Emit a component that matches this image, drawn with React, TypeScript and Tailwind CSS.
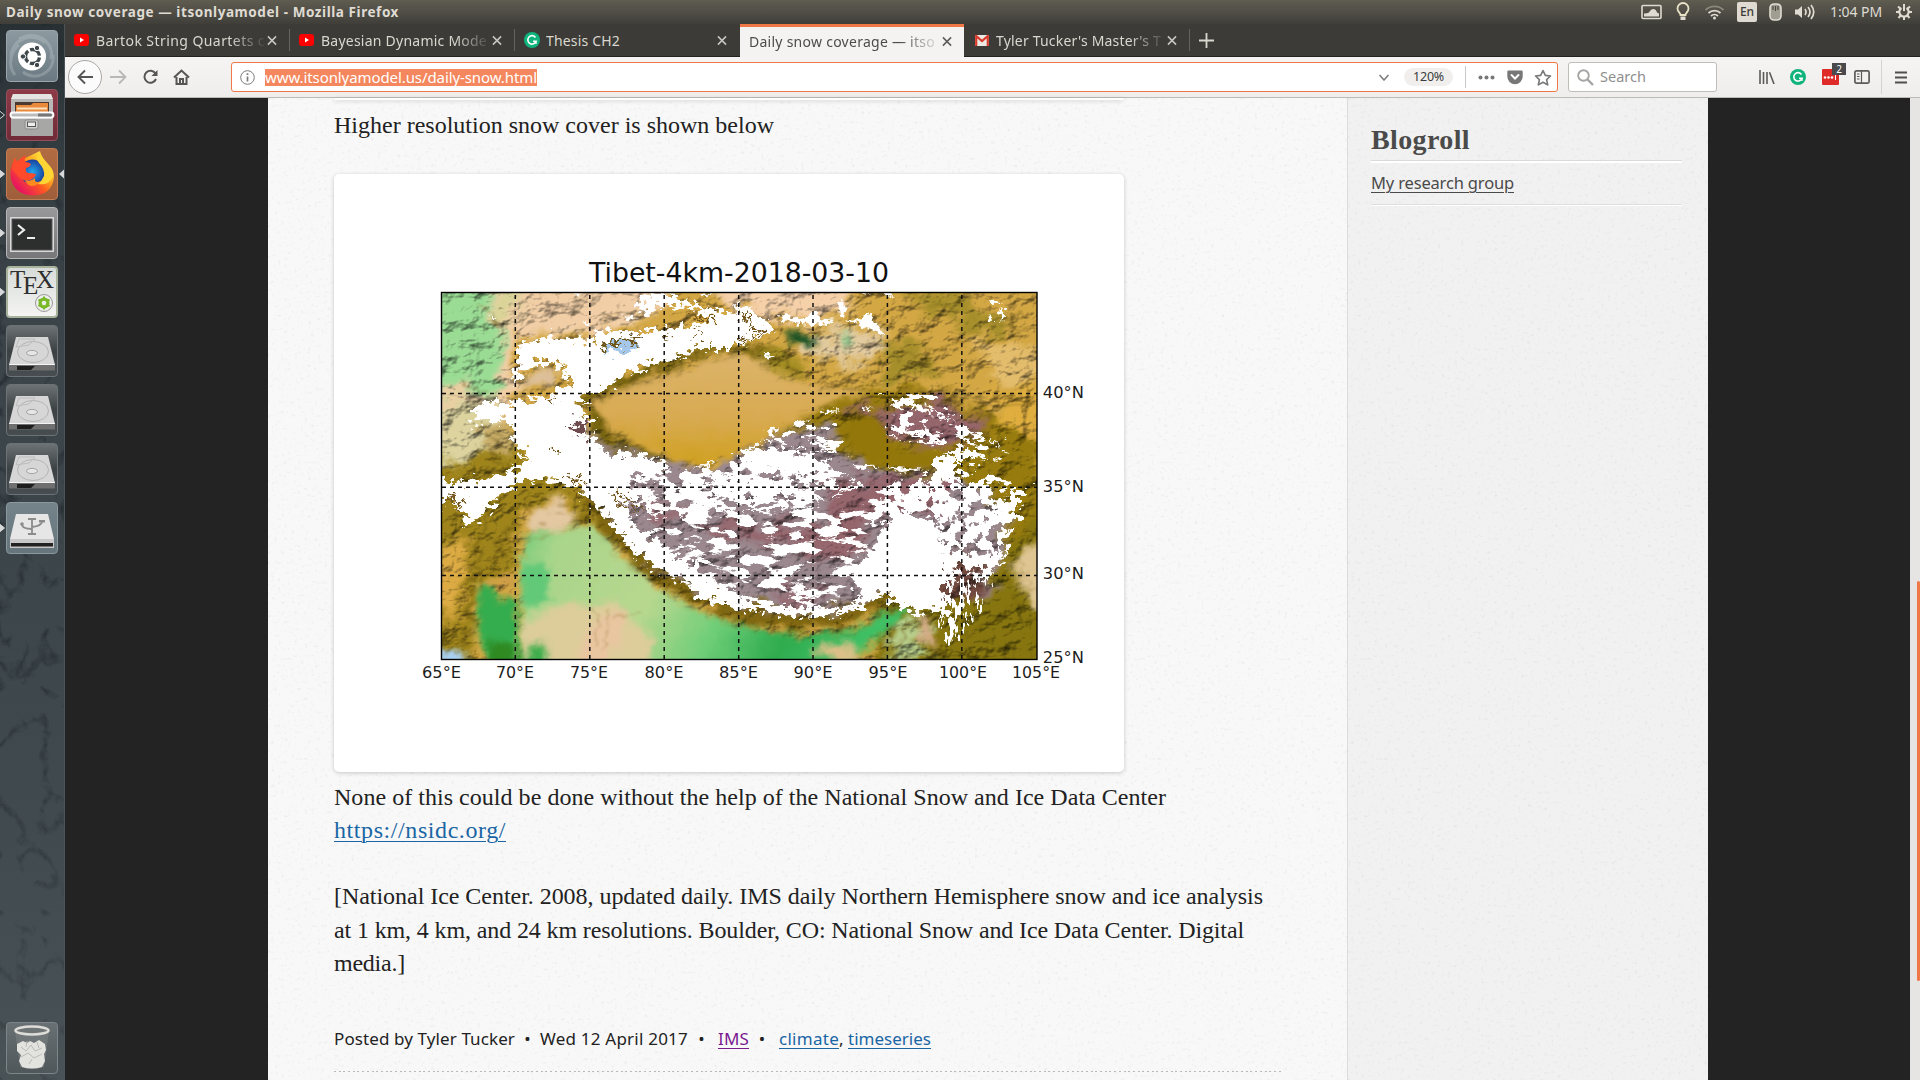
import { useLayoutEffect, useRef, type ReactNode } from "react";

/* Text run whose tracking is adjusted so it occupies a given width. */
function Fit({ w, className = "", children }: { w: number; className?: string; children: string }) {
  const ref = useRef<HTMLSpanElement>(null);
  useLayoutEffect(() => {
    const el = ref.current;
    if (!el) return;
    el.style.letterSpacing = "0px";
    const natural = el.getBoundingClientRect().width;
    el.style.letterSpacing = `${(w - natural) / children.length}px`;
  }, [w, children]);
  return (
    <span ref={ref} className={`inline-block whitespace-pre ${className}`}>
      {children}
    </span>
  );
}

/* ---------- top panel ---------- */

function TopPanel() {
  return (
    <header className="flex h-6 items-center justify-between bg-linear-to-b from-[#5f5c50] via-[#504e46] to-[#3f3e39] pl-1.5 pr-[7px] text-[#dfdbd2]">
      <Fit w={393} className="text-[13.5px] leading-6 font-bold">Daily snow coverage — itsonlyamodel - Mozilla Firefox</Fit>
      <div className="flex h-6 items-center">
        <svg width="21" height="16" viewBox="0 0 21 16">
          <rect x="1" y="1.500" width="19" height="13" rx="1" fill="none" stroke="#dfdbd2" strokeWidth="1.600" />
          <path d="M3 9.500Q6 9.500 8 8.500 10 4.500 13 5 15.500 5.500 16 8.500L18 9.500V12.500H3Z" fill="#dfdbd2" />
        </svg>
        <svg className="ml-[13px]" width="16" height="20" viewBox="0 0 16 20">
          <path d="M5.500 13C5.500 11 2.500 10 2.500 6.500a5.500 5.500 0 0 1 11 0c0 3.500-3 4.500-3 6.500Z" fill="none" stroke="#e8e2c6" strokeWidth="1.800" />
          <path d="M5.500 14.500h5v3.500h-5z" fill="#dfdbd2" />
        </svg>
        <svg className="ml-[13px]" width="21" height="16" viewBox="0 0 21 16" fill="none" strokeWidth="1.800">
          <path d="M1.500 6a13 13 0 0 1 18 0" stroke="#8a877d" />
          <path d="M4.500 9a9 9 0 0 1 12 0" stroke="#dfdbd2" />
          <path d="M7 12a5 5 0 0 1 7 0" stroke="#dfdbd2" />
          <circle cx="10.500" cy="14" r="1.500" fill="#dfdbd2" />
        </svg>
        <span className="ml-[12px] flex h-5 w-5 items-center justify-center rounded-[2px] bg-[#dfdbd2] text-[12px] font-medium text-[#3c3b37]">En</span>
        <svg className="ml-[12px]" width="13" height="18" viewBox="0 0 13 18">
          <rect x="1" y="1" width="11" height="16" rx="4" fill="#a09d93" stroke="#dfdbd2" strokeWidth="1.600" />
          <path d="M6.500 3v5M4 3v4M9 3v4" stroke="#4a4841" strokeWidth="1.200" />
        </svg>
        <svg className="ml-[12px]" width="22" height="18" viewBox="0 0 22 18" fill="none" stroke="#dfdbd2" strokeWidth="1.700">
          <path d="M1 6.500h3L8 3v12l-4-3.500H1Z" fill="#dfdbd2" stroke="none" />
          <path d="M11 6q2 3 0 6M14 4q4 5 0 10M17 2q5.500 7 0 14" />
        </svg>
        <Fit w={52} className="ml-[14px] text-[14px] leading-6">1:04 PM</Fit>
        <svg className="ml-[13px]" width="18" height="18" viewBox="0 0 18 18" fill="none" stroke="#dfdbd2">
          <path d="M6.500 5a4.700 4.700 0 1 0 5 0" strokeWidth="2.200" />
          <path d="M9 1v7" strokeWidth="2" />
          <path d="M9 14v3M1 9h3M14 9h3M3 3.500l2.300 2M15 3.500l-2.300 2M3.500 15l2-2.300M14.500 15l-2-2.300" strokeWidth="2" />
        </svg>
      </div>
    </header>
  );
}

/* ---------- launcher ---------- */

function Tile({ className = "", arrow, focus, children }: { className?: string; arrow?: "solid" | "hollow"; focus?: boolean; children: ReactNode }) {
  return (
    <div className="relative flex h-[52px] w-full shrink-0 pl-1.5">
      {arrow && (
        <svg className="absolute top-[21px] left-0" width="6" height="10" viewBox="0 0 6 10">
          <path d="M-1 0.500 4.500 5-1 9.500Z" fill={arrow === "solid" ? "#d6d8d9" : "none"} stroke="#d6d8d9" />
        </svg>
      )}
      {focus && (
        <svg className="absolute top-[21px] right-[1px]" width="5" height="10" viewBox="0 0 5 10">
          <path d="M5 .5V9.500L0 5Z" fill="#d6d8d9" />
        </svg>
      )}
      <div className={`h-[52px] w-[52px] overflow-hidden rounded-[4px] border ${className}`}>{children}</div>
    </div>
  );
}

function Drive() {
  return (
    <Tile className="border-[#6b7376] bg-linear-to-b from-[#6d7274] via-[#3c4143] to-[#474d50]">
      <svg width="50" height="50" viewBox="0 0 50 50">
        <path d="M9 11h32l7 28v5H2v-5Z" fill="#d6d6d6" />
        <path d="M2 39h46v5.500H2Z" fill="#6f6f6f" />
        <path d="M10 40h18l-4 4H10Z" fill="#1e1e1e" />
        <path d="M2 38.500h46" stroke="#f4f4f4" />
        <ellipse cx="26" cy="26" rx="15.500" ry="10.500" fill="none" stroke="#b5b5b5" />
        <path d="M12 13h16l-6 6-13 2Z" fill="none" stroke="#bdbdbd" />
        <ellipse cx="25" cy="27" rx="5.500" ry="2.600" fill="#e6e6e6" stroke="#a5a5a5" />
      </svg>
    </Tile>
  );
}

function Launcher() {
  return (
    <aside className="relative flex h-[1056px] w-[65px] shrink-0 flex-col gap-[7px] bg-[#3c4549] pt-1.5">
      <svg className="absolute inset-0" width="65" height="1056">
        <filter id="stone" colorInterpolationFilters="sRGB">
          <feTurbulence type="turbulence" baseFrequency="0.022 0.018" numOctaves="5" seed="7" />
          <feColorMatrix values="0 0 0 0 .12  0 0 0 0 .15  0 0 0 0 .17  -4 0 0 0 .85" />
        </filter>
        <linearGradient id="stoneShade" x2="0" y2="1">
          <stop offset="0" stopColor="#20282c" stopOpacity=".7" />
          <stop offset=".35" stopColor="#3a4347" stopOpacity="0" />
          <stop offset="1" stopColor="#5a6366" stopOpacity=".45" />
        </linearGradient>
        <rect width="65" height="1056" filter="url(#stone)" />
        <rect width="65" height="1056" fill="url(#stoneShade)" />
        <path d="M64.500 0V1056" stroke="#4c5457" />
      </svg>
      <Tile className="border-[#9aa6ab] bg-linear-to-b from-[#8c9aa0] to-[#6b7a82]">
        <svg width="50" height="50" viewBox="0 0 50 50">
          <g fill="none" stroke="#c8d0d4" strokeOpacity=".3" strokeWidth="3">
            <path d="M4 26C4 8 26 0 38 12M46 24c2 18-18 27-30 17M12 8C28-2 48 10 44 28M8 44C0 34 4 20 12 14" />
          </g>
          <circle cx="25" cy="25.500" r="14" fill="#fff" />
          <circle cx="25.500" cy="25.500" r="7" fill="none" stroke="#3f484c" strokeWidth="3.400" strokeDasharray="12.500 2.160" strokeDashoffset="-1" />
          <g fill="#3f484c" stroke="#fff">
            <circle cx="16" cy="25.500" r="2.700" />
            <circle cx="30" cy="17" r="2.700" />
            <circle cx="30" cy="34" r="2.700" />
          </g>
        </svg>
      </Tile>
      <Tile arrow="hollow" className="border-[#94505b] bg-linear-to-b from-[#8e3a48] to-[#702a38]">
        <svg width="50" height="50" viewBox="0 0 50 50">
          <path d="M6 4h38l2 6v36H4V10Z" fill="#b8b8b6" />
          <path d="M6 4h38l2 5H4Z" fill="#e4e4e2" />
          <path d="M8 12h34v12H8Z" fill="#4c3a30" />
          <path d="M9 15h15l2-2h15v11H9Z" fill="#e98a3a" />
          <path d="M10 18.500h30" stroke="#fbe0bd" strokeWidth="2" />
          <path d="M4 29h42v17H4Z" fill="#a7a7a5" />
          <rect x="3.500" y="22.500" width="43" height="5" rx="2.500" fill="#bbb" stroke="#fff" strokeWidth="1.800" />
          <path d="M31 23.500h13q2 1.500 0 3H31Z" fill="#777" />
          <rect x="18" y="30" width="13" height="9" rx="2" fill="#d2d2d0" stroke="#8a8a88" />
          <rect x="20.500" y="32" width="8" height="4.500" fill="#eee" stroke="#555" />
        </svg>
      </Tile>
      <Tile arrow="solid" focus className="border-[#c07d55] bg-linear-to-b from-[#b26c42] to-[#9f5e3a]">
        <svg width="50" height="50" viewBox="0 0 50 50">
          <defs>
            <linearGradient id="fxTail" x1=".85" y1=".1" x2=".15" y2=".8">
              <stop offset="0" stopColor="#fff04a" />
              <stop offset=".35" stopColor="#ffa81f" />
              <stop offset=".6" stopColor="#ff5a1f" />
              <stop offset="1" stopColor="#e8175d" />
            </linearGradient>
            <radialGradient id="fxGlobe">
              <stop offset="0" stopColor="#1fa8f0" />
              <stop offset="1" stopColor="#1c3f9c" />
            </radialGradient>
          </defs>
          <path d="M33 2q-3 4-3 8 16 4 17 18-2 18-21 18.500C8 46 3 33 3.500 22Q5 14 8 8q0 4 2 5Z" fill="url(#fxTail)" />
          <circle cx="25.500" cy="23" r="12.500" fill="url(#fxGlobe)" />
          <path d="M8 8q0 4 3 4 4-4 8-6-2 4-1 7 4 0 6 2-1 3-5 4-1 4 2 5 4 0 8 1-1 4-6 6-7 2-12-4L5 20Z" fill="#ff4a2b" />
          <path d="M18 31q6 2 10-2-1 6 6 3-4 5-10 5-4-1-6-6Z" fill="#ff8a1f" />
          <path d="M33 2q-6 6-1 12 6 6 5 13-2 5-6 8 10 2 15-7C49 18 36 14 33 2Z" fill="#ffd435" />
        </svg>
      </Tile>
      <Tile arrow="solid" className="border-[#b5b5b6] bg-linear-to-b from-[#98989a] to-[#77777a]">
        <svg width="50" height="50" viewBox="0 0 50 50">
          <rect x="3" y="9" width="44" height="35" fill="#d9d9d9" />
          <rect x="5" y="11" width="40" height="31" fill="#2d2e2e" stroke="#555" />
          <path d="M11 17l6 5-6 5" fill="none" stroke="#eee" strokeWidth="2.200" />
          <path d="M20 30h8" stroke="#eee" strokeWidth="2.200" />
        </svg>
      </Tile>
      <Tile arrow="solid" className="border-2 border-[#a9b39b] bg-linear-to-b from-[#d8dcd8] to-[#f4f4f2]">
        <div className="relative h-[48px] w-[48px]">
          <div className="flex pl-[2px] font-['Liberation_Serif',serif] text-[25px] leading-[24px] text-[#2f2f2f]">
            <span className="w-[13px]">T</span>
            <span className="w-[13px] translate-y-[6px]">E</span>
            <span>X</span>
          </div>
          <svg className="absolute inset-0" width="48" height="48" viewBox="0 0 48 48">
            <circle cx="36" cy="35" r="8.500" fill="#eee" stroke="#999" />
            <circle cx="36" cy="35" r="4" fill="none" stroke="#79b928" strokeWidth="3" />
            <path d="M36 28.500v13M30.400 31.700l11.200 6.500M30.400 38.200l11.200-6.500" stroke="#79b928" strokeWidth="2" />
            <circle cx="36" cy="35" r="2.200" fill="#eee" />
          </svg>
        </div>
      </Tile>
      <Drive />
      <Drive />
      <Drive />
      <Tile arrow="solid" className="border-[#8b989d] bg-linear-to-b from-[#75838a] to-[#66747b]">
        <svg width="50" height="50" viewBox="0 0 50 50">
          <path d="M9 11h32l6 25v9H3v-9Z" fill="#e6e6e6" />
          <path d="M3 36h44v9H3Z" fill="#c7c7c7" />
          <rect x="4" y="40" width="42" height="3.500" fill="#222" />
          <g stroke="#8b8b8b" strokeWidth="1.800" fill="none">
            <path d="M25 15v16M25 26q-10 0-10-5M25 24q10-1 10-6M21 31h8M21 16h8" />
          </g>
          <circle cx="15" cy="21" r="1.800" fill="#8b8b8b" />
          <path d="M32 17h6v2.500h-6z" fill="#8b8b8b" />
        </svg>
      </Tile>
      <div className="mt-auto pb-1.5">
        <Tile className="border-[#7d8588] bg-linear-to-b from-[#687073] to-[#4f575a]">
          <svg width="50" height="50" viewBox="0 0 50 50">
            <path d="M8 8h34l-5 36q-12 4-24 0Z" fill="#777e7f" fillOpacity=".7" />
            <path d="m10 21 6-3 4 2 3-2 4 2 5-3 6 4 1 6-2 4 1 7-3 6q-10 3-20 0l-3-6 2-6-4-4Z" fill="#e2e3df" />
            <path d="m14 24 5 4 5-6 4 6 7-3M14 34l7-4 6 5 8-4M22 41l3-5M20 18l-1 6M30 19l2 6" stroke="#b9bbb6" fill="none" />
            <ellipse cx="25" cy="7.500" rx="16.500" ry="4" fill="#6f7575" stroke="#dcdcd8" strokeWidth="2.600" />
          </svg>
        </Tile>
      </div>
    </aside>
  );
}

/* ---------- browser chrome ---------- */

function Close({ dark }: { dark?: boolean }) {
  return (
    <svg className="shrink-0" width="10" height="11" viewBox="0 0 11 11" stroke={dark ? "#5c5c5a" : "#c8c6c0"} strokeWidth="1.700">
      <path d="M1 1l9 9M10 1l-9 9" />
    </svg>
  );
}

function YouTube() {
  return (
    <svg className="mr-[7px] shrink-0" width="15" height="12" viewBox="0 0 15 12">
      <rect width="15" height="12" rx="3" fill="#f00" />
      <path d="M6 3.500 10 6 6 8.500Z" fill="#fff" />
    </svg>
  );
}

function Grammarly({ className = "" }: { className?: string }) {
  return (
    <svg className={`shrink-0 ${className}`} width="16" height="16" viewBox="0 0 16 16">
      <circle cx="8" cy="8" r="8" fill="#0fb37c" />
      <path d="M11.500 5.500A4.200 4.200 0 1 0 12 9.200H9" fill="none" stroke="#fff" strokeWidth="1.600" />
      <path d="M12 9v3" stroke="#fff" strokeWidth="1.300" />
    </svg>
  );
}

function TabBar() {
  const label = "min-w-0 flex-1 overflow-hidden text-[14px] leading-[33px]";
  const fade = "[mask-image:linear-gradient(to_right,#000_78%,transparent)]";
  return (
    <div className="flex h-[33px] items-stretch border-b border-[#24231f] bg-[#3c3b37] text-[#dad7cf]">
      <div className="flex w-[224px] items-center pr-[12px] pl-[9px]">
        <YouTube />
        <div className={`${label} ${fade}`}><Fit w={169}>Bartok String Quartets c</Fit></div>
        <Close />
      </div>
      <div className="my-[5px] w-px bg-[#66645e]" />
      <div className="flex w-[224px] items-center pr-[12px] pl-[9px]">
        <YouTube />
        <div className={`${label} ${fade}`}><Fit w={166}>Bayesian Dynamic Mode</Fit></div>
        <Close />
      </div>
      <div className="my-[5px] w-px bg-[#66645e]" />
      <div className="flex w-[225px] items-center pr-[13px] pl-[9px]">
        <Grammarly className="mr-[6px]" />
        <div className={label}><Fit w={74}>Thesis CH2</Fit></div>
        <Close />
      </div>
      <div className="z-10 -mb-px flex w-[224px] items-center border-t-[3px] border-[#f07746] bg-[#f4f3f1] pr-[12px] pb-[2px] pl-[9px] text-[#4c4c4a]">
        <div className={`${label} ${fade}`}><Fit w={186}>Daily snow coverage — itso</Fit></div>
        <Close dark />
      </div>
      <div className="flex w-[225px] items-center pr-[12px] pl-[11px]">
        <svg className="mr-[7px] shrink-0" width="14" height="11" viewBox="0 0 14 11">
          <rect width="14" height="11" fill="#ece9e4" />
          <path d="M1.200 11V1L7 6l5.800-5v10" fill="none" stroke="#d8392b" strokeWidth="2.200" />
        </svg>
        <div className={`${label} ${fade}`}><Fit w={165}>Tyler Tucker's Master's T</Fit></div>
        <Close />
      </div>
      <div className="my-[5px] w-px bg-[#66645e]" />
      <svg className="mt-[9px] ml-[9px]" width="15" height="15" viewBox="0 0 15 15" stroke="#dad7cf" strokeWidth="1.800">
        <path d="M7.500 0v15M0 7.500h15" />
      </svg>
    </div>
  );
}

function NavBar() {
  return (
    <div className="flex h-[41px] items-center border-b border-[#bdbbb8] bg-linear-to-b from-[#f5f4f3] to-[#efeeec] pl-[3px] text-[#5b5b59]">
      <span className="flex h-[34px] w-[34px] items-center justify-center rounded-full border border-[#a9a8a6] bg-[#fbfbfb]">
        <svg width="17" height="16" viewBox="0 0 17 16" fill="none" stroke="#555" strokeWidth="1.900"><path d="M8 1.500 1.500 8 8 14.500M2 8h14" /></svg>
      </span>
      <svg className="ml-[8px]" width="17" height="16" viewBox="0 0 17 16" fill="none" stroke="#b9b8b6" strokeWidth="1.800"><path d="M9 1.500l6.500 6.500L9 14.500M15 8H0" /></svg>
      <svg className="ml-[15px]" width="17" height="16" viewBox="0 0 17 16" fill="none" stroke="#555" strokeWidth="2">
        <path d="M13.500 4.500A6 6 0 1 0 14 10" /><path d="M15.500 1v6h-6Z" fill="#555" stroke="none" />
      </svg>
      <svg className="ml-[14px]" width="17" height="16" viewBox="0 0 17 16" fill="none" stroke="#555" strokeWidth="2">
        <path d="M1 8.500 8.500 1.500 16 8.500M3.500 8v7h10V8" /><path d="M7 15v-5h3v5" />
      </svg>
      <div className="ml-[41px] flex h-[30px] w-[1327px] items-center rounded-[3px] border border-[#f07746] bg-white pr-[5px] pl-[8px]">
        <svg width="15" height="15" viewBox="0 0 15 15" fill="none" stroke="#7b7b7b">
          <circle cx="7.500" cy="7.500" r="6.800" /><path d="M7.500 6.500v5M7.500 3.300v1.800" strokeWidth="1.700" />
        </svg>
        <span className="ml-[10px] flex h-[17px] items-center bg-[#f4875d] text-[15px] text-white"><Fit w={272}>www.itsonlyamodel.us/daily-snow.html</Fit></span>
        <svg className="ml-auto" width="10" height="7" viewBox="0 0 10 7" fill="none" stroke="#777" strokeWidth="1.500"><path d="M.5 1 5 6 9.500 1" /></svg>
        <span className="ml-[15px] flex h-[18px] w-[49px] items-center justify-center rounded-full bg-[#f0efee] text-[#3c3c3c]"><Fit w={31} className="text-[12.5px] leading-[18px]">120%</Fit></span>
        <span className="ml-[12px] h-[22px] w-px bg-[#c9c8c6]" />
        <svg className="ml-[12px]" width="17" height="5" fill="#777"><circle cx="2.500" cy="2.500" r="2" /><circle cx="8.500" cy="2.500" r="2" /><circle cx="14.500" cy="2.500" r="2" /></svg>
        <svg className="ml-[12px]" width="16" height="15" viewBox="0 0 16 15">
          <path d="M1.500.5h13q1.200 0 1.200 1.300V6.500a7.700 7.700 0 0 1-15.400 0V1.800Q.3.500 1.500.5Z" fill="#777" />
          <path d="M4.500 5 8 8.500 11.500 5" fill="none" stroke="#fff" strokeWidth="2" strokeLinecap="round" />
        </svg>
        <svg className="ml-[11px]" width="18" height="17" viewBox="0 0 18 17" fill="none" stroke="#777" strokeWidth="1.600" strokeLinejoin="round">
          <path d="M9 1.500l2.300 4.900 5.200.6-3.900 3.600 1.100 5.300L9 13.200l-4.700 2.700 1.100-5.300L1.500 7l5.200-.6Z" />
        </svg>
      </div>
      <div className="ml-[10px] flex h-[30px] w-[149px] items-center rounded-[3px] border border-[#bfbdb8] bg-white pl-[8px] text-[#8f8f8d]">
        <svg width="17" height="17" viewBox="0 0 17 17" fill="none" stroke="#a5a5a3" strokeWidth="1.900"><circle cx="6.500" cy="6.500" r="5.300" /><path d="M10.500 10.500 16 16" strokeWidth="2.400" /></svg>
        <Fit w={46} className="ml-[6px] text-[14.5px]">Search</Fit>
      </div>
      <svg className="ml-[42px]" width="16" height="14" viewBox="0 0 16 14" stroke="#5b5b59" strokeWidth="1.600"><path d="M1 0v14M4.500 2v12M8 2v12M10.500 2.200 15 14" /></svg>
      <Grammarly className="ml-[15px]" />
      <div className="relative ml-[16px] h-[16px] w-[17px] rounded-[1px] bg-[#df2a2a]">
        <svg className="absolute top-[6px] left-[1px]" width="15" height="5" fill="#fff"><circle cx="2" cy="2.500" r="1.300" /><circle cx="5.500" cy="2.500" r="1.300" /><circle cx="9" cy="2.500" r="1.300" /><path d="M12 0h1v5h-1z" /></svg>
        <span className="absolute -top-[6px] left-[10px] flex h-[12px] w-[14px] items-center justify-center bg-[#4a4a4c] text-[10px] text-white">2</span>
      </div>
      <svg className="ml-[15px]" width="16" height="14" viewBox="0 0 16 14" fill="none" stroke="#5b5b59" strokeWidth="1.700"><rect x=".9" y=".9" width="14.200" height="12.200" rx="1.500" /><path d="M7.500 1v12M3 4h2.500M3 6.500h2.500M3 9h2.500" strokeWidth="1.200" /></svg>
      <span className="ml-[11px] h-[34px] w-px bg-[#d4d3d0]" />
      <svg className="ml-[13px]" width="12" height="13" viewBox="0 0 12 13" stroke="#4f4f4d" strokeWidth="1.900"><path d="M0 1.500h12M0 6.500h12M0 11.500h12" /></svg>
    </div>
  );
}

/* ---------- snow cover figure ---------- */

const meridians = [515.3, 589.8, 664.2, 738.7, 813, 887.4, 961.8];
const parallels = [393.6, 487.2, 575.5];
const lonLabels: [string, number, number][] = [
  ["65°E", 441.5, 39], ["70°E", 515, 38], ["75°E", 589, 38], ["80°E", 664, 39], ["85°E", 738.5, 39],
  ["90°E", 813, 39], ["95°E", 888, 39], ["100°E", 963, 48], ["105°E", 1036, 48],
];
const latLabels: [string, number][] = [["40°N", 398.4], ["35°N", 492.2], ["30°N", 579], ["25°N", 663.4]];

/* Noise thresholded to white specks, kept inside a shape with an uneven outline. */
function SnowFilter({ id, freq, octaves, seed, matrix, spread }: { id: string; freq: string; octaves: number; seed: number; matrix: string; spread: number }) {
  return (
    <filter id={id} filterUnits="userSpaceOnUse" x="430" y="280" width="620" height="390" colorInterpolationFilters="sRGB">
      <feTurbulence type="fractalNoise" baseFrequency={freq} numOctaves={octaves} seed={seed} result="n" />
      <feColorMatrix in="n" values={matrix} result="m" />
      <feDisplacementMap in="SourceGraphic" in2="n" scale={spread} xChannelSelector="B" yChannelSelector="G" result="s" />
      <feComposite in="m" in2="s" operator="in" />
    </filter>
  );
}

function SnowMap() {
  return (
    <svg className="block" width="790" height="598" viewBox="334 174 790 598">
      <defs>
        <clipPath id="frame"><rect x="441.500" y="292.500" width="595.500" height="367" /></clipPath>
        <filter id="relief" filterUnits="userSpaceOnUse" x="430" y="280" width="620" height="390" colorInterpolationFilters="sRGB">
          <feGaussianBlur in="SourceGraphic" stdDeviation="4" result="b" />
          <feTurbulence type="fractalNoise" baseFrequency="0.040 0.055" numOctaves="4" seed="11" result="n" />
          <feDisplacementMap in="b" in2="n" scale="34" xChannelSelector="R" yChannelSelector="G" result="d" />
          <feColorMatrix in="n" values="0 0 0 0 0  0 0 0 0 0  0 0 0 0 0  1 0 0 0 0" result="h" />
          <feDiffuseLighting in="h" surfaceScale="5.500" diffuseConstant="1.300" lightingColor="#fff" result="l">
            <feDistantLight azimuth="225" elevation="52" />
          </feDiffuseLighting>
          <feComposite in="d" in2="l" operator="arithmetic" k1="0.820" k2="0.200" k3="0" k4="0" />
        </filter>
        <filter id="soft" filterUnits="userSpaceOnUse" x="430" y="280" width="620" height="390" colorInterpolationFilters="sRGB">
          <feGaussianBlur in="SourceGraphic" stdDeviation="3" result="b" />
          <feTurbulence type="fractalNoise" baseFrequency="0.060" numOctaves="3" seed="4" result="n" />
          <feDisplacementMap in="b" in2="n" scale="14" xChannelSelector="R" yChannelSelector="G" />
        </filter>
        <filter id="veins" filterUnits="userSpaceOnUse" x="430" y="280" width="620" height="390" colorInterpolationFilters="sRGB">
          <feTurbulence type="fractalNoise" baseFrequency="0.030 0.060" numOctaves="3" seed="4" result="n" />
          <feDisplacementMap in="SourceGraphic" in2="n" scale="40" xChannelSelector="R" yChannelSelector="G" result="d" />
          <feGaussianBlur in="d" stdDeviation="1.200" />
        </filter>
        <filter id="ragged" filterUnits="userSpaceOnUse" x="430" y="280" width="620" height="390" colorInterpolationFilters="sRGB">
          <feTurbulence type="fractalNoise" baseFrequency="0.130 0.160" numOctaves="3" seed="3" result="n" />
          <feDisplacementMap in="SourceGraphic" in2="n" scale="24" xChannelSelector="R" yChannelSelector="G" />
        </filter>
        <filter id="nibbled" filterUnits="userSpaceOnUse" x="430" y="280" width="620" height="390" colorInterpolationFilters="sRGB">
          <feTurbulence type="fractalNoise" baseFrequency="0.200" numOctaves="2" seed="6" result="n" />
          <feDisplacementMap in="SourceGraphic" in2="n" scale="10" xChannelSelector="R" yChannelSelector="G" />
        </filter>
        <SnowFilter id="patchy" freq="0.038 0.090" octaves={6} seed={21} spread={40} matrix="0 0 0 0 1  0 0 0 0 1  0 0 0 0 1  24 0 0 0 -12.700" />
        <SnowFilter id="dense" freq="0.060 0.100" octaves={5} seed={9} spread={40} matrix="0 0 0 0 1  0 0 0 0 1  0 0 0 0 1  0 26 0 0 -12.000" />
        <SnowFilter id="thick" freq="0.090 0.090" octaves={5} seed={31} spread={40} matrix="0 0 0 0 1  0 0 0 0 1  0 0 0 0 1  0 26 0 0 -11.200" />
        <SnowFilter id="sparse" freq="0.070 0.130" octaves={4} seed={15} spread={40} matrix="0 0 0 0 1  0 0 0 0 1  0 0 0 0 1  0 26 0 0 -14.100" />
        <SnowFilter id="streaks" freq="0.200 0.060" octaves={4} seed={2} spread={24} matrix="0 0 0 0 1  0 0 0 0 1  0 0 0 0 1  22 0 0 0 -11.200" />
        <linearGradient id="tarim" x2="0" y2="1"><stop offset="0" stopColor="#dcb46c" /><stop offset=".6" stopColor="#d8aa50" /><stop offset="1" stopColor="#cfa01c" /></linearGradient>
        <linearGradient id="ganges" x1="0" x2="1" y2=".2">
          <stop offset="0" stopColor="#6fca78" /><stop offset=".12" stopColor="#a9d58a" /><stop offset=".42" stopColor="#b8d78f" />
          <stop offset=".62" stopColor="#6fce78" /><stop offset=".8" stopColor="#2fab4e" /><stop offset="1" stopColor="#3fbf64" />
        </linearGradient>
      </defs>

      <g clipPath="url(#frame)">
        <g filter="url(#relief)">
          <path d="M420 270H1060V680H420Z" fill="#cfa443" />
          <path d="M420 270H690L650 315 600 335 515 340 520 400 500 440 420 470Z" fill="#eccaa2" />
          <path d="M420 270H500L482 300 492 320 505 345 500 392 420 385Z" fill="#98d892" />
          <path d="M505 270 512 270 520 310 500 330 488 305Z" fill="#d6d096" />
          <path d="M420 400 500 400 500 430 490 455 420 465Z" fill="#d8cf9c" />
          <path d="M690 270H870L840 320 790 322 740 310Z" fill="#f0cca6" />
          <path d="M800 335 880 325 890 350 850 365 800 350Z" fill="#dfc79c" />
          <path d="M880 345 930 345 930 375 880 382ZM900 290 960 293 985 320 930 315ZM960 318 1015 320 1010 335 960 335Z" fill="#a38c2a" />
          <path d="M970 340 1045 350 1045 385 990 380Z" fill="#e0b96a" />
          <path d="M740 350 770 345 815 370 800 382 760 370Z" fill="#a08a22" />
          <path d="M575 395 620 372 660 355 740 342 780 350 760 358 700 358 650 380 600 402 625 440 665 455 690 470 640 462 600 445Z" fill="#75620f" />
          <path d="M690 468 740 452 780 420 820 395 890 388 950 395 1000 420 1045 440 1045 560 1000 560 960 480 880 470Z" fill="#94790e" />
          <path d="M995 390 1055 395 1055 440 1000 430Z" fill="#dbab3d" />
          <path d="M480 425 515 425 515 460 490 462Z" fill="#c4aa66" />
          <path d="M420 465 520 450 600 490 640 545 600 540 560 500 520 510 515 570 480 575 470 680 420 680Z" fill="#9b811a" />
          <path d="M420 540 470 548 458 620 420 612Z" fill="#d8a842" />
          <path d="M480 580 515 580 515 596 490 590Z" fill="#c99a45" />
          <path d="M575 425 600 440 640 457 700 466 740 448 780 428 830 425 850 460 900 472 950 470 1000 500 1010 540 985 600 940 600 900 588 840 612 780 612 720 600 660 568 610 520 580 470Z" fill="#97858b" />
          <path d="M830 480 950 475 950 510 870 520 850 560 760 540 700 530 700 520 830 530ZM640 500 700 515 660 520ZM760 590 830 590 800 605ZM850 410 950 400 990 430 950 450 890 440Z" fill="#93646b" />
          <path d="M900 560 990 560 975 600 940 610Z" fill="#71493f" />
          <path d="M885 600 940 605 980 600 1005 560 1045 490 1060 500 1060 680 870 680Z" fill="#84730f" />
          <path d="M588 500 620 540 660 577 720 608 780 622 840 621 880 604 895 590" fill="none" stroke="#7c6410" strokeWidth="20" />
          <path d="M890 620 925 620 930 655 890 660Z" fill="#b3c987" />
        </g>

        <g stroke="#5d4c10" strokeOpacity=".5" fill="none" strokeWidth="2" filter="url(#veins)">
          <path d="M520 515 500 560M490 510 470 570M480 540 462 640M505 530 495 570M475 590 462 650M530 500 515 520M880 640 910 610M895 650 925 618M985 320 1030 320M900 305 960 310M840 385 870 375M600 395 660 372M610 405 650 388M770 360 820 378M990 410 1030 398M960 430 1000 450M1000 620 1030 590M970 640 1000 610M475 305 500 325M455 380 480 390M485 430 510 470M495 430 515 455M895 360 925 365M930 350 960 345" />
        </g>

        <g filter="url(#soft)">
          <path d="M592 402 622 388 662 376 705 362 745 352 785 378 830 388 875 392 830 402 798 420 765 442 728 458 690 466 662 452 625 440 608 425Z" fill="url(#tarim)" />
          <path d="M843 424 868 415 885 425 893 448 940 457 930 470 890 466 855 458Z" fill="#93770a" />
          <path d="M522 534 560 530 592 526 622 556 655 586 700 611 745 626 800 636 850 631 885 612 905 608 905 615 878 638 860 655 840 675H660L520 675 520 600Z" fill="url(#ganges)" />
          <path d="M522 568 545 560 550 600 522 612Z" fill="#62c978" />
          <path d="M478 584 490 588 497 600 515 598 520 674 488 670 478 630Z" fill="#34ad4e" />
          <path d="M490 640 515 645 515 674H485Z" fill="#2f8a22" />
          <path d="M522 622 560 606 618 602 634 625 658 640 640 674H522Z" fill="#dccd9a" />
          <path d="M595 620 625 608 620 640 600 674 570 674Z" fill="#e9c5a0" />
          <path d="M528 648 545 640 548 674 522 674Z" fill="#3fae4c" />
          <path d="M525 518 560 495 578 520 560 530 530 532Z" fill="#e3c8a2" />
          <path d="M815 648 850 640 862 664 815 655Z" fill="#dcc088" />
          <path d="M918 612 930 620 935 650 920 640Z" fill="#d3ac86" />
          <path d="M1010 568 1030 545 1060 530 1060 615 1030 605Z" fill="#dec592" />
          <path d="M430 648 466 654 470 674 430 674Z" fill="#a9d2f5" />
          <path d="M788 333 813 337 815 343 795 341Z" fill="#0d4b22" stroke="#0d4b22" strokeWidth="4" />
          <path d="M843 333 852 338 846 350Z" fill="#6fc98a" />
          <path d="M522 385 535 370 550 368 560 378 548 388Z" fill="#ddc09a" />
        </g>

        <g stroke="#8a6a24" strokeOpacity=".4" fill="none" filter="url(#veins)">
          <path d="M600 610 590 640M615 610 605 650M620 620 640 605M530 540 560 528M540 515 565 510M1020 560 1035 590M1015 580 1030 570M905 640 920 625M885 655 900 635" strokeWidth="1.500" />
        </g>

        <g fill="#fff">
          <g filter="url(#ragged)">
            <path d="M519 344 545 338 590 341 602 330 640 332 680 327 715 320 692 310 668 304 640 315 637 304 648 294 670 295 695 304 730 314 739 303 752 312 770 322 775 332 752 340 738 348 700 348 675 358 648 365 624 376 600 391 584 394 578 402 585 420 592 438 604 452 640 455 662 462 672 472 650 478 632 474 628 486 640 500 622 500 628 515 640 530 662 545 690 564 720 584 745 600 780 608 808 606 840 610 862 598 850 574 872 552 885 525 905 512 938 525 945 560 945 595 950 615 935 610 905 612 885 592 865 605 838 616 792 617 728 606 700 598 688 582 665 574 640 558 624 538 610 520 592 502 580 487 558 484 540 477 520 482 505 490 494 505 470 525 462 512 450 498 438 512 438 482 470 480 505 475 528 460 514 440 510 422 482 422 472 428 474 412 482 402 520 402 548 396 568 385 570 376 556 362 540 362 520 376 512 386 516 366Z" />
            <path d="M735 456 755 450 780 448 808 458 835 466 800 474 770 472 750 466ZM700 485 740 478 790 484 810 494 760 498 730 492ZM935 458 952 456 962 482 935 480ZM955 448 972 450 972 460 955 460Z" />
          </g>
          <g filter="url(#nibbled)">
            <path d="M781 314 800 318 815 312 820 318 834 320 822 326 800 324 782 320ZM846 322 862 318 868 312 874 322 886 336 872 330 858 324ZM838 300 843 300 846 312 840 316ZM860 292 872 295 862 294ZM884 290 895 298 886 296ZM990 300 1004 303 990 304ZM998 310 1005 308 1003 322ZM989 314 994 322 988 322ZM764 353 776 356 766 359ZM622 316 640 318 628 320ZM488 315 499 319 492 319ZM702 293 712 295 706 298ZM584 320 590 323 586 326ZM574 293 582 295 578 298Z" />
            <path d="M889 398 900 402 905 412 892 404ZM908 398 925 408 932 416 912 408ZM925 405 950 418 956 422 938 414ZM888 425 910 430 898 434ZM922 422 935 440 928 438ZM955 432 978 444 968 444ZM988 436 1004 450 992 442ZM765 430 780 426 770 436ZM820 411 842 410 826 414ZM860 407 874 408 862 410ZM790 425 810 420 800 428ZM812 440 838 448 822 448ZM740 452 765 440 752 450ZM690 468 720 460 708 466ZM850 465 880 466 862 470ZM888 466 925 470 900 472Z" />
          </g>
          <path d="M612 458 700 478 760 456 800 453 835 470 860 488 830 500 780 512 740 512 690 520 650 516 630 500Z" filter="url(#dense)" />
          <path d="M640 470 700 480 760 500 860 500 900 480 930 480 900 530 870 570 840 600 770 605 690 580 640 540Z" filter="url(#patchy)" />
          <path d="M890 400 930 402 955 417 960 432 995 442 1000 465 950 462 930 450 890 440ZM765 447 790 430 835 435 850 460 790 450ZM960 470 1025 490 1025 510 970 508ZM578 405 596 436 574 436Z" filter="url(#sparse)" />
          <path d="M875 505 890 488 940 478 975 488 1020 500 1020 520 1010 540 1000 562 985 585 970 572 940 585 900 580Z" filter="url(#thick)" />
          <path d="M940 575 996 565 980 605 966 632 944 642 942 610Z" filter="url(#streaks)" />
        </g>

        <g filter="url(#ragged)">
          <path d="M604 348 620 342 638 340 630 350 610 352Z" fill="#a5c8ea" />
          <path d="M602 348 622 340 640 340" stroke="#6b5415" strokeWidth="3" fill="none" />
          <path d="M574 420 588 424 584 438 572 432Z" fill="#6d4b4c" />
          <path d="M545 400 555 402M570 492 580 496M550 450 556 451M566 474 582 484M612 496 630 512M615 490 640 510M690 315 715 322M740 310 752 328M700 330 696 338M664 335 670 334M764 330 740 344M445 500 470 502M450 490 462 510" stroke="#705218" strokeWidth="2" fill="none" />
        </g>

        <g stroke="#111" strokeWidth="1.500" strokeDasharray="4 4" fill="none">
          {meridians.map((x) => <path key={x} d={`M${x} 659V293`} />)}
          {parallels.map((y) => <path key={y} d={`M442 ${y}H1037`} />)}
        </g>
      </g>
      <rect x="441.500" y="292.500" width="595.500" height="367" fill="none" stroke="#000" strokeWidth="1.400" />

      <g fontFamily="DejaVu Sans, sans-serif" fill="#111">
        <text x="589" y="282.400" fontSize="26" textLength="300" lengthAdjust="spacingAndGlyphs">Tibet-4km-2018-03-10</text>
        <g fontSize="16" fill="#1c1c1c">
          {lonLabels.map(([t, x, w]) => <text key={t} x={x - w / 2} y="678" textLength={w} lengthAdjust="spacingAndGlyphs">{t}</text>)}
          {latLabels.map(([t, y]) => <text key={t} x="1042.800" y={y} textLength="41" lengthAdjust="spacingAndGlyphs">{t}</text>)}
        </g>
      </g>
    </svg>
  );
}

/* ---------- page ---------- */

function Grain({ w }: { w: number }) {
  return (
    <svg className="pointer-events-none absolute inset-0" width={w} height="982">
      <filter id={`grain${w}`} colorInterpolationFilters="sRGB">
        <feTurbulence type="fractalNoise" baseFrequency="0.300" numOctaves="2" seed="5" />
        <feColorMatrix values="0 0 0 0 .5  0 0 0 0 .5  0 0 0 0 .5  1.800 0 0 0 -1.080" />
      </filter>
      <rect width={w} height="982" filter={`url(#grain${w})`} opacity=".2" />
    </svg>
  );
}

function Article() {
  const link = "text-[#1a66a5] underline decoration-1 underline-offset-[3px]";
  return (
    <main className="relative h-[982px] w-[1079px] bg-[#f8f8f8] pl-[66px] font-['Liberation_Serif',serif] text-[24px] leading-[33.600px] text-[#222]">
      <Grain w={1079} />
      <div className="relative">
        <div className="h-[2px] w-[790px] rounded-b-[4px] bg-white shadow-[0_1px_4px_rgba(0,0,0,.2)]" />
        <p className="mt-[9px] h-[33px]"><Fit w={440}>Higher resolution snow cover is shown below</Fit></p>
        <div className="mt-[32px] h-[598px] w-[790px] overflow-hidden rounded-[5px] bg-white shadow-[0_1px_4px_rgba(0,0,0,.2)]"><SnowMap /></div>
        <p className="mt-[9px] flex h-[67px] flex-col items-start leading-[33px]">
          <Fit w={832}>None of this could be done without the help of the National Snow and Ice Data Center</Fit>
          <Fit w={172} className={link}>https://nsidc.org/</Fit>
        </p>
        <p className="mt-[32px] flex h-[100px] flex-col items-start">
          <Fit w={929}>[National Ice Center. 2008, updated daily. IMS daily Northern Hemisphere snow and ice analysis</Fit>
          <Fit w={910}>at 1 km, 4 km, and 24 km resolutions. Boulder, CO: National Snow and Ice Data Center. Digital</Fit>
          <Fit w={71}>media.]</Fit>
        </p>
        <footer className="mt-[42px] flex h-[49px] w-[948px] font-['Noto_Sans',sans-serif] text-[17px]">
          <Fit w={181}>Posted by Tyler Tucker</Fit>
          <span className="w-[25px] text-center">•</span>
          <Fit w={148}>Wed 12 April 2017</Fit>
          <span className="w-[30px] pr-[3px] text-center">•</span>
          <Fit w={31} className="h-fit text-[#7a1a8f] underline underline-offset-[3px]">IMS</Fit>
          <span className="w-[30px] pr-[4px] text-center">•</span>
          <Fit w={60} className={`h-fit ${link}`}>climate</Fit>
          <span className="w-[9px]">,</span>
          <Fit w={83} className={`h-fit ${link}`}>timeseries</Fit>
        </footer>
        <div className="h-px w-[948px] bg-[repeating-linear-gradient(to_right,#b8b8b8_0_2px,transparent_2px_4.700px)]" />
      </div>
    </main>
  );
}

function Sidebar() {
  return (
    <aside className="relative h-[982px] w-[361px] border-l border-[#dcdcdc] bg-[#f1f1f1] pt-[24px] pr-[26px] pl-[23px] text-[#4a4a4a]">
      <Grain w={360} />
      <div className="relative">
        <h2 className="h-[39px] border-b border-[#dadada] font-['Liberation_Serif',serif] text-[28px] leading-[36px] font-bold shadow-[0_2px_0_#fff]"><Fit w={99}>Blogroll</Fit></h2>
        <p className="h-[44px] border-b border-[#dedede] font-['Noto_Sans',sans-serif] text-[16.500px] leading-[43px] shadow-[0_1px_0_#fff]">
          <Fit w={143} className="underline decoration-1 underline-offset-[3px]">My research group</Fit>
        </p>
      </div>
    </aside>
  );
}

export default function App() {
  return (
    <div className="h-[1080px] w-[1920px] overflow-hidden bg-[#232323] font-['Noto_Sans','Open_Sans',sans-serif]">
      <TopPanel />
      <div className="flex">
        <Launcher />
        <div className="w-[1855px]">
          <TabBar />
          <NavBar />
          <div className="flex h-[982px]">
            <div className="w-[203px] bg-[#232323]" />
            <Article />
            <Sidebar />
            <div className="flex-1 bg-[#232323]" />
            <div className="w-[10px] bg-[#e6e5e4] pt-[483px]"><div className="ml-auto h-[400px] w-[3px] rounded-full bg-[#f07746]" /></div>
          </div>
        </div>
      </div>
    </div>
  );
}
